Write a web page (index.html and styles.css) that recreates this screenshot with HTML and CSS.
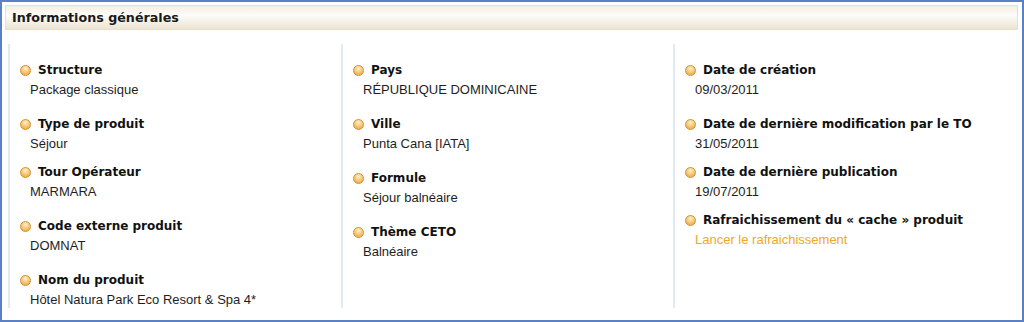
FILE: index.html
```html
<!DOCTYPE html>
<html lang="fr">
  <head>
    <meta charset="UTF-8" />
    <title>Informations générales</title>
    <link rel="stylesheet" href="styles.css">
  </head>
  <body>
    <div class="frame">
      <div class="panel-title">Informations générales</div>
      <div class="columns">
        <div class="col">
          <div class="item">
            <div class="label"><span class="dot"></span>Structure</div>
            <div class="value">Package classique</div>
          </div>
          <div class="item">
            <div class="label"><span class="dot"></span>Type de produit</div>
            <div class="value">Séjour</div>
          </div>
          <div class="item tight">
            <div class="label"><span class="dot"></span>Tour Opérateur</div>
            <div class="value">MARMARA</div>
          </div>
          <div class="item">
            <div class="label"><span class="dot"></span>Code externe produit</div>
            <div class="value">DOMNAT</div>
          </div>
          <div class="item">
            <div class="label"><span class="dot"></span>Nom du produit</div>
            <div class="value">Hôtel Natura Park Eco Resort &amp; Spa 4*</div>
          </div>
        </div>
        <div class="col">
          <div class="item">
            <div class="label"><span class="dot"></span>Pays</div>
            <div class="value">RÉPUBLIQUE DOMINICAINE</div>
          </div>
          <div class="item">
            <div class="label"><span class="dot"></span>Ville</div>
            <div class="value">Punta Cana [IATA]</div>
          </div>
          <div class="item">
            <div class="label"><span class="dot"></span>Formule</div>
            <div class="value">Séjour balnéaire</div>
          </div>
          <div class="item">
            <div class="label"><span class="dot"></span>Thème CETO</div>
            <div class="value">Balnéaire</div>
          </div>
        </div>
        <div class="col">
          <div class="item">
            <div class="label"><span class="dot"></span>Date de création</div>
            <div class="value">09/03/2011</div>
          </div>
          <div class="item">
            <div class="label"><span class="dot"></span>Date de dernière modification par le TO</div>
            <div class="value">31/05/2011</div>
          </div>
          <div class="item tight">
            <div class="label"><span class="dot"></span>Date de dernière publication</div>
            <div class="value">19/07/2011</div>
          </div>
          <div class="item tight">
            <div class="label"><span class="dot"></span>Rafraichissement du « cache » produit</div>
            <div class="value"><a href="#" class="link">Lancer le rafraichissement</a></div>
          </div>
        </div>
      </div>
    </div>
  </body>
</html>
```

FILE: styles.css
```css
body {
  margin: 0;
  background: #fff;
  font-family: "Liberation Sans", Arial, sans-serif;
  color: #222;
}

.frame {
  width: 1024px;
  height: 322px;
  box-sizing: border-box;
  border: 2px solid #5b80c4;
  padding: 3px 4px 0 3px;
  overflow: hidden;
}

.panel-title {
  height: 25px;
  box-sizing: border-box;
  border: 1px solid #e9dfcc;
  background: linear-gradient(#f4efe4, #fdfcf9 40%, #ece4d3);
  padding-left: 6px;
  line-height: 23px;
  font-family: "DejaVu Sans", Verdana, sans-serif;
  font-weight: bold;
  font-size: 12.7px;
  color: #1a1a1a;
}

.columns {
  display: grid;
  grid-template-columns: 333px 332px 333px;
  margin: 14px 0 0 3px;
}

.col {
  box-sizing: border-box;
  border-left: 2px solid #e1e9f5;
  height: 264px;
  padding: 16px 0 0 10px;
}

.item {
  margin-bottom: 14px;
}

.item.tight {
  margin-top: -6px;
}

.label {
  display: flex;
  align-items: center;
  height: 20px;
  font-family: "DejaVu Sans", Verdana, sans-serif;
  font-weight: bold;
  font-size: 12px;
  color: #111;
}

.dot {
  width: 11px;
  height: 11px;
  border-radius: 50%;
  margin-right: 7px;
  box-sizing: border-box;
  border: 1px solid #d38f33;
  background: radial-gradient(circle at 50% 28%, #fff0cc 0%, #f8cf85 40%, #eb9f35 100%);
}

.value {
  height: 20px;
  line-height: 20px;
  padding-left: 10px;
  font-size: 13px;
  color: #1e1e1e;
}

.link {
  color: #f5a623;
  text-decoration: none;
}
```
